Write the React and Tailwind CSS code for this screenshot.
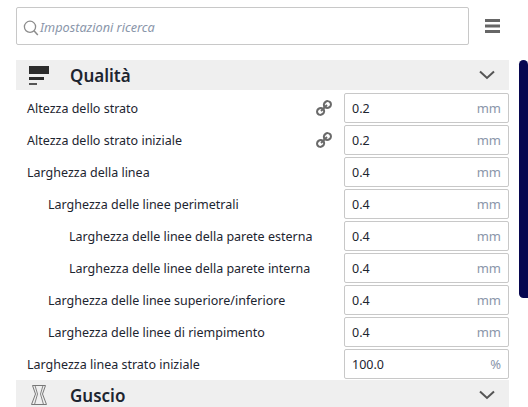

import React from "react";

const Row = ({ label, indent = "pl-[11px]", value, unit = "mm", link }) => (
  <div className="flex h-[32px] items-start">
    <div className={`flex h-[30px] w-[328px] items-center ${indent} text-[12.5px] text-[#1d2530]`}>
      <span className="whitespace-nowrap pt-[2px]">{label}</span>
      {link && (
        <svg className="ml-auto mr-[12px]" width="16" height="16" viewBox="0 0 16 16" fill="none" stroke="#6a6a6a" strokeWidth="2.1">
          <ellipse cx="4.6" cy="11.4" rx="3.6" ry="3.3" transform="rotate(-40 4.6 11.4)" />
          <ellipse cx="11.4" cy="4.6" rx="3.6" ry="3.3" transform="rotate(-40 11.4 4.6)" />
          <path d="M5 11 L11 5" strokeWidth="1.9" />
        </svg>
      )}
    </div>
    <div className="flex h-[30px] w-[165px] items-center justify-between rounded-[2px] border border-[#c8c8c8] bg-white px-[7px] pt-[2px]">
      <span className="text-[12.5px] text-[#1d2530]">{value}</span>
      <span className="text-[13px] text-[#8a96aa]">{unit}</span>
    </div>
  </div>
);

const Chevron = () => (
  <svg width="16" height="10" viewBox="0 0 16 10" fill="none" stroke="#555" strokeWidth="2">
    <path d="M1 1.5 L8 8 L15 1.5" />
  </svg>
);

const Header = ({ icon, title, className = "" }) => (
  <div className={`flex h-[30px] w-[493px] items-center bg-[#efefef] pl-[13px] pr-[14px] ${className}`}>
    <div className="flex w-[41px] items-center">{icon}</div>
    <span className="pt-px text-[17px] font-semibold text-[#1d2530]">{title}</span>
    <div className="ml-auto"><Chevron /></div>
  </div>
);

export default function App() {
  return (
    <div className="relative h-[407px] w-[528px] overflow-hidden bg-white pl-[16px] pt-[7px]" style={{ fontFamily: '"Noto Sans", sans-serif' }}>
      <div className="flex items-center">
        <div className="flex h-[38px] w-[453px] items-center rounded-[2px] border border-[#c8c8c8] bg-white pl-[6px] pt-[3px]">
          <svg width="16" height="16" viewBox="0 0 16 16" fill="none" stroke="#8c8c8c" strokeWidth="1.3">
            <circle cx="7" cy="6.8" r="5.6" />
            <path d="M11 10.8 L14.8 15" strokeWidth="1.5" />
          </svg>
          <span className="ml-px text-[12.7px] italic text-[#8a96aa]">Impostazioni ricerca</span>
        </div>
        <svg className="ml-[16px]" width="15" height="14" viewBox="0 0 15 14" fill="#666">
          <rect x="0" y="0" width="15" height="3" />
          <rect x="0" y="5.5" width="15" height="3" />
          <rect x="0" y="11" width="15" height="3" />
        </svg>
      </div>

      <Header
        className="mt-[15px]"
        title="Qualità"
        icon={
          <svg width="20" height="20" viewBox="0 0 20 20" fill="#2b2b2b">
            <rect x="0" y="1" width="20" height="8" />
            <rect x="0" y="12" width="15" height="3" />
            <rect x="0" y="18" width="8" height="2" fill="#555" />
          </svg>
        }
      />
      <div className="pt-[3px]">
        <Row label="Altezza dello strato" value="0.2" link />
        <Row label="Altezza dello strato iniziale" value="0.2" link />
        <Row label="Larghezza della linea" value="0.4" />
        <Row label="Larghezza delle linee perimetrali" indent="pl-[32px]" value="0.4" />
        <Row label="Larghezza delle linee della parete esterna" indent="pl-[53px]" value="0.4" />
        <Row label="Larghezza delle linee della parete interna" indent="pl-[53px]" value="0.4" />
        <Row label="Larghezza delle linee superiore/inferiore" indent="pl-[32px]" value="0.4" />
        <Row label="Larghezza delle linee di riempimento" indent="pl-[32px]" value="0.4" />
        <Row label="Larghezza linea strato iniziale" value="100.0" unit="%" />
      </div>
      <Header
        className="-mt-px"
        title="Guscio"
        icon={
          <svg width="20" height="22" viewBox="0 0 20 22" fill="none" stroke="#777" strokeWidth="1">
            <path d="M3.5 1.5 H16.5 L13.5 10 L17.5 20.5 H2.5 L6.5 10 Z" />
            <path d="M6 1.5 L8.5 10 L5.5 20.5 M14 1.5 L11.5 10 L14.5 20.5" strokeWidth="0.9" />
          </svg>
        }
      />
      <div className="absolute left-[519px] top-[60px] h-[238px] w-[9px] rounded-t-[5px] rounded-bl-[5px] bg-[#070750]" />
    </div>
  );
}
